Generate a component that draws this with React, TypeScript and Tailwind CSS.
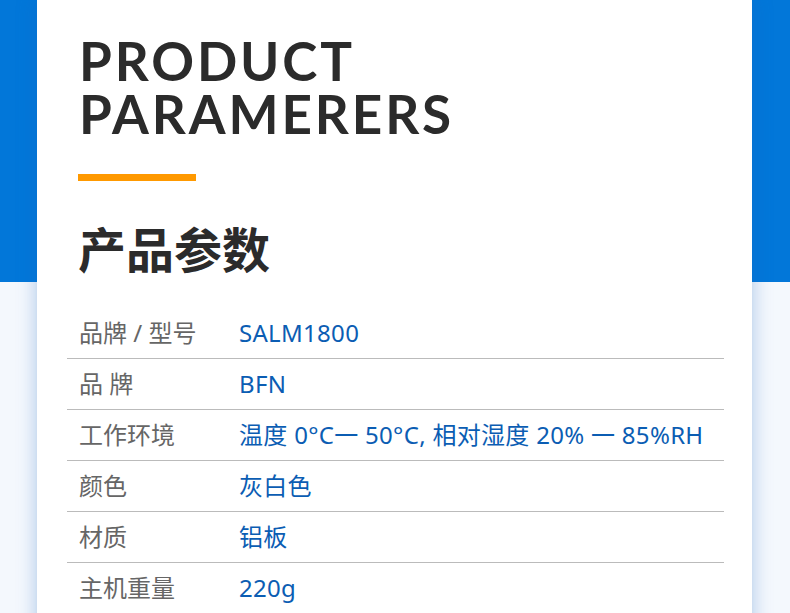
const rows = [
  { label: "品牌 / 型号", value: "SALM1800" },
  { label: "品 牌", value: "BFN" },
  { label: "工作环境", value: "温度 0°C一 50°C, 相对湿度 20% 一 85%RH" },
  { label: "颜色", value: "灰白色" },
  { label: "材质", value: "铝板" },
  { label: "主机重量", value: "220g" },
];

const App = () => {
  return (
    <div className="min-h-screen w-full bg-[linear-gradient(to_bottom,#0277d9_282px,#f4f8fd_282px)] overflow-hidden">
      <div className="ml-[37px] w-[715px] bg-white pt-[34px] pb-10 shadow-[0_0_18px_rgba(30,100,190,0.35)]">
        <h1
          className="pl-[42px] text-[53px] leading-[53px] font-bold tracking-[2.9px] text-[#2b2b2b]"
          style={{ fontFamily: "Lato, 'Noto Sans', sans-serif" }}
        >
          <div>PRODUCT</div>
          <div>PARAMERERS</div>
        </h1>
        <div className="ml-[41px] mt-[34px] h-[7px] w-[118px] bg-[#ff9900]"></div>
        <h2
          className="ml-[41px] mt-[42px] text-[48px] leading-[48px] font-bold text-[#2b2b2b]"
          style={{ fontFamily: "'Noto Sans CJK SC', sans-serif" }}
        >
          产品参数
        </h2>
        <div
          className="ml-[30px] mt-[37px] w-[657px]"
          style={{ fontFamily: "'Noto Sans', 'Noto Sans CJK SC', sans-serif" }}
        >
          {rows.map((row, index) => (
            <div
              key={index}
              className="flex h-[51px] items-center border-b border-[#bbbbbb] text-[24px]"
            >
              <div className="w-[172px] pl-3 text-[#666666]">{row.label}</div>
              <div className="tracking-[0.3px] text-[#0b5db3]">{row.value}</div>
            </div>
          ))}
        </div>
      </div>
    </div>
  );
};

export default App;
